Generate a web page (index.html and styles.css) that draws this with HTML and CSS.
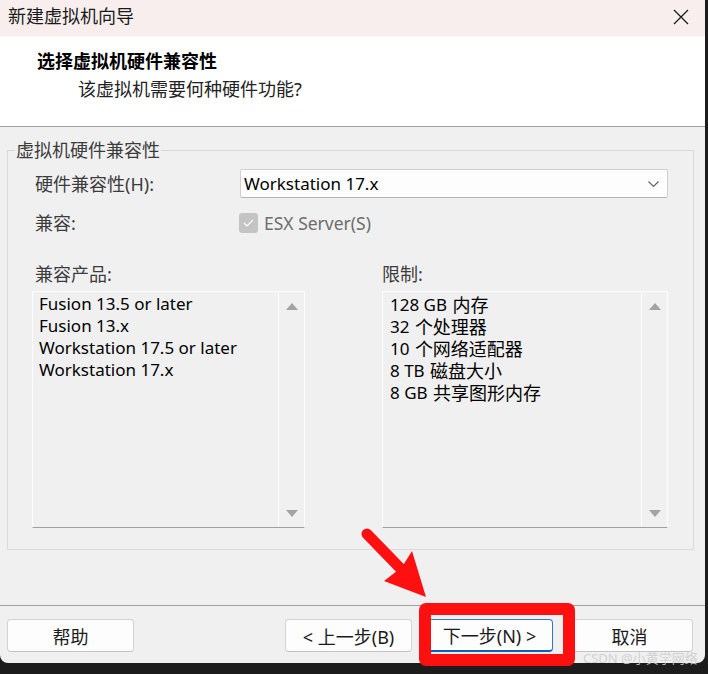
FILE: index.html
```html
<!DOCTYPE html>
<html lang="zh-CN">
<head>
	<meta charset="UTF-8">
	<title>新建虚拟机向导</title>
	<link rel="stylesheet" href="styles.css">
</head>
<body>
	<div class="window">
		<div class="titlebar">
			<span>新建虚拟机向导</span>
			<svg class="close" width="16" height="16" viewBox="0 0 16 16">
				<path d="M1 1 L15 15 M15 1 L1 15" stroke="#1a1a1a" stroke-width="1.3" fill="none"/>
			</svg>
		</div>

		<div class="header">
			<h1>选择虚拟机硬件兼容性</h1>
			<p class="sub">该虚拟机需要何种硬件功能?</p>
		</div>

		<div class="main">
			<fieldset>
				<legend>虚拟机硬件兼容性</legend>

				<div class="row row1">
					<label>硬件兼容性(H):</label>
					<div class="combo">
						<span>Workstation 17.x</span>
						<svg width="11" height="6" viewBox="0 0 11 6">
							<path d="M0.5 0.5 L5.5 5.5 L10.5 0.5" stroke="#606060" stroke-width="1.1" fill="none"/>
						</svg>
					</div>
				</div>

				<div class="row row2">
					<label>兼容:</label>
					<span class="check">
						<svg width="11" height="8" viewBox="0 0 11 8">
							<path d="M1 4 L4 7 L10 1" stroke="#fff" stroke-width="1.2" fill="none"/>
						</svg>
					</span>
					<span class="esx">ESX Server(S)</span>
				</div>

				<div class="cols">
					<div class="col col1">
						<div class="cap">兼容产品:</div>
						<div class="list">
							<ul class="items">
								<li>Fusion 13.5 or later</li>
								<li>Fusion 13.x</li>
								<li>Workstation 17.5 or later</li>
								<li>Workstation 17.x</li>
							</ul>
							<div class="scroll"><i class="up"></i><i class="down"></i></div>
						</div>
					</div>
					<div class="col col2">
						<div class="cap">限制:</div>
						<div class="list">
							<ul class="items">
								<li>128 GB <span class="cn">内存</span></li>
								<li>32 <span class="cn">个处理器</span></li>
								<li>10 <span class="cn">个网络适配器</span></li>
								<li>8 TB <span class="cn">磁盘大小</span></li>
								<li>8 GB <span class="cn">共享图形内存</span></li>
							</ul>
							<div class="scroll"><i class="up"></i><i class="down"></i></div>
						</div>
					</div>
				</div>
			</fieldset>
		</div>

		<div class="footer">
			<button>帮助</button>
			<div class="nav">
				<button>&lt; 上一步(B)</button>
				<button class="primary">下一步(N) &gt;</button>
				<button>取消</button>
			</div>
		</div>
	</div>

	<!-- 标注 -->
	<div class="mark"></div>
	<svg class="arrow" width="80" height="90" viewBox="355 520 80 90">
		<path d="M367 534 L401 569" stroke="#ff1010" stroke-width="11" stroke-linecap="round" fill="none"/>
		<polygon points="426,597 412,551 402,567 384,581" fill="#ff1010"/>
	</svg>
	<div class="watermark">CSDN @小黄学网络</div>
</body>
</html>
```

FILE: styles.css
```css
* {
	box-sizing: border-box;
}

h1, p, ul, li {
	margin: 0;
	padding: 0;
}

ul {
	list-style: none;
}

body {
	margin: 0;
	width: 708px;
	height: 674px;
	overflow: hidden;
	position: relative;
	background: #1c1c1c;
	font-family: "Noto Sans", "Noto Sans CJK SC", sans-serif;
	color: #1a1a1a;
}

.window {
	width: 705px;
	height: 663px;
	background: #f0f0f0;
	border-radius: 0 0 8px 8px;
	overflow: hidden;
	display: flex;
	flex-direction: column;
}

.titlebar {
	height: 36px;
	flex: none;
	display: flex;
	align-items: center;
	padding: 0 16px 4px 8px;
	background: #f8eeee;
	font-size: 18px;
	line-height: 20px;
}

.titlebar .close {
	margin-left: auto;
	margin-top: 2px;
}

.header {
	height: 91px;
	flex: none;
	padding: 15px 0 0 37px;
	background: #fff;
	border-bottom: 1px solid #a0a0a0;
}

.header h1 {
	font-size: 18px;
	line-height: 20px;
	font-weight: bold;
	color: #000;
}

.header .sub {
	margin: 8px 0 0 41px;
	font-size: 18px;
	line-height: 20px;
	color: #222;
}

.main {
	padding: 13px 0 0 7px;
}

fieldset {
	margin: 0;
	padding: 0 0 21px 0;
	width: 687px;
	min-width: 0;
	border: 1px solid #dadada;
}

legend {
	margin-left: 7px;
	padding: 0 1px;
	font-size: 18px;
	line-height: 20px;
	color: #3c3c3c;
}

.row {
	display: flex;
	align-items: center;
	padding-left: 27px;
}

.row label {
	width: 205px;
	font-size: 18px;
	line-height: 20px;
	color: #3c3c3c;
}

.row1 {
	height: 29px;
	margin-top: 9px;
}

.combo {
	width: 428px;
	height: 29px;
	display: flex;
	align-items: center;
	justify-content: space-between;
	padding: 0 8px 0 3px;
	background: #fdfdfd;
	border: 1px solid #cfcfcf;
	border-bottom-color: #b4b4b4;
	border-radius: 2px;
	font-size: 17px;
	color: #000;
}

.row2 {
	height: 20px;
	margin-top: 15px;
}

.row2 label {
	width: 204px;
}

.check {
	width: 19px;
	height: 20px;
	border-radius: 3px;
	background: #c4c4c4;
	display: flex;
	align-items: center;
	justify-content: center;
}

.esx {
	margin-left: 6px;
	font-size: 17.5px;
	line-height: 20px;
	color: #6d6d6d;
}

.cols {
	display: flex;
	gap: 77px;
	margin: 31px 0 0 24px;
}

.col1 {
	width: 273px;
}

.col2 {
	width: 286px;
}

.cap {
	height: 20px;
	margin-bottom: 7px;
	font-size: 18px;
	line-height: 20px;
	color: #3c3c3c;
}

.col1 .cap {
	padding-left: 3px;
}

.list {
	height: 237px;
	display: flex;
	border: 1px solid #fdfdfd;
	border-bottom-color: #a0a0a0;
}

.items {
	flex: 1;
	padding: 1px 0 0 6px;
	font-size: 17px;
	line-height: 22px;
	color: #000;
}

.items li {
	height: 22px;
	white-space: nowrap;
}

.col2 .items {
	padding-left: 7px;
	padding-top: 2px;
}

.items .cn {
	font-size: 18px;
	margin-left: 1px;
	vertical-align: top;
}

.scroll {
	width: 26px;
	display: flex;
	flex-direction: column;
	justify-content: space-between;
	align-items: center;
	padding: 11px 0 10px;
	border-left: 1px solid #fdfdfd;
}

.scroll i {
	width: 0;
	height: 0;
	border-left: 6px solid transparent;
	border-right: 6px solid transparent;
}

.scroll .up {
	border-bottom: 7px solid #a3a3a3;
}

.scroll .down {
	border-top: 7px solid #a3a3a3;
}

.footer {
	margin-top: auto;
	height: 58px;
	flex: none;
	display: flex;
	padding: 13px 12px 0 7px;
	border-top: 1px solid #a0a0a0;
}

.footer .nav {
	margin-left: auto;
	display: flex;
	gap: 14px;
}

.footer .nav button + button + button {
	margin-left: -1px;
}

button {
	width: 127px;
	height: 33px;
	padding: 0;
	background: #fdfdfd;
	border: 1px solid #d3d3d3;
	border-bottom-color: #c2c2c2;
	border-radius: 4px;
	font-family: "Noto Sans", "Noto Sans CJK SC", sans-serif;
	font-size: 18px;
	color: #1a1a1a;
}

button.primary {
	border-color: #2b79d0;
	border-bottom: 2px solid #0f5fb8;
}

.mark {
	position: absolute;
	left: 419px;
	top: 603px;
	width: 156px;
	height: 63px;
	border: 12px solid #ff1010;
	border-radius: 7px;
}

.arrow {
	position: absolute;
	left: 355px;
	top: 520px;
}

.watermark {
	position: absolute;
	left: 583px;
	top: 650px;
	font-size: 13px;
	line-height: 16px;
	color: rgba(205, 205, 205, 0.9);
	white-space: nowrap;
}
```
